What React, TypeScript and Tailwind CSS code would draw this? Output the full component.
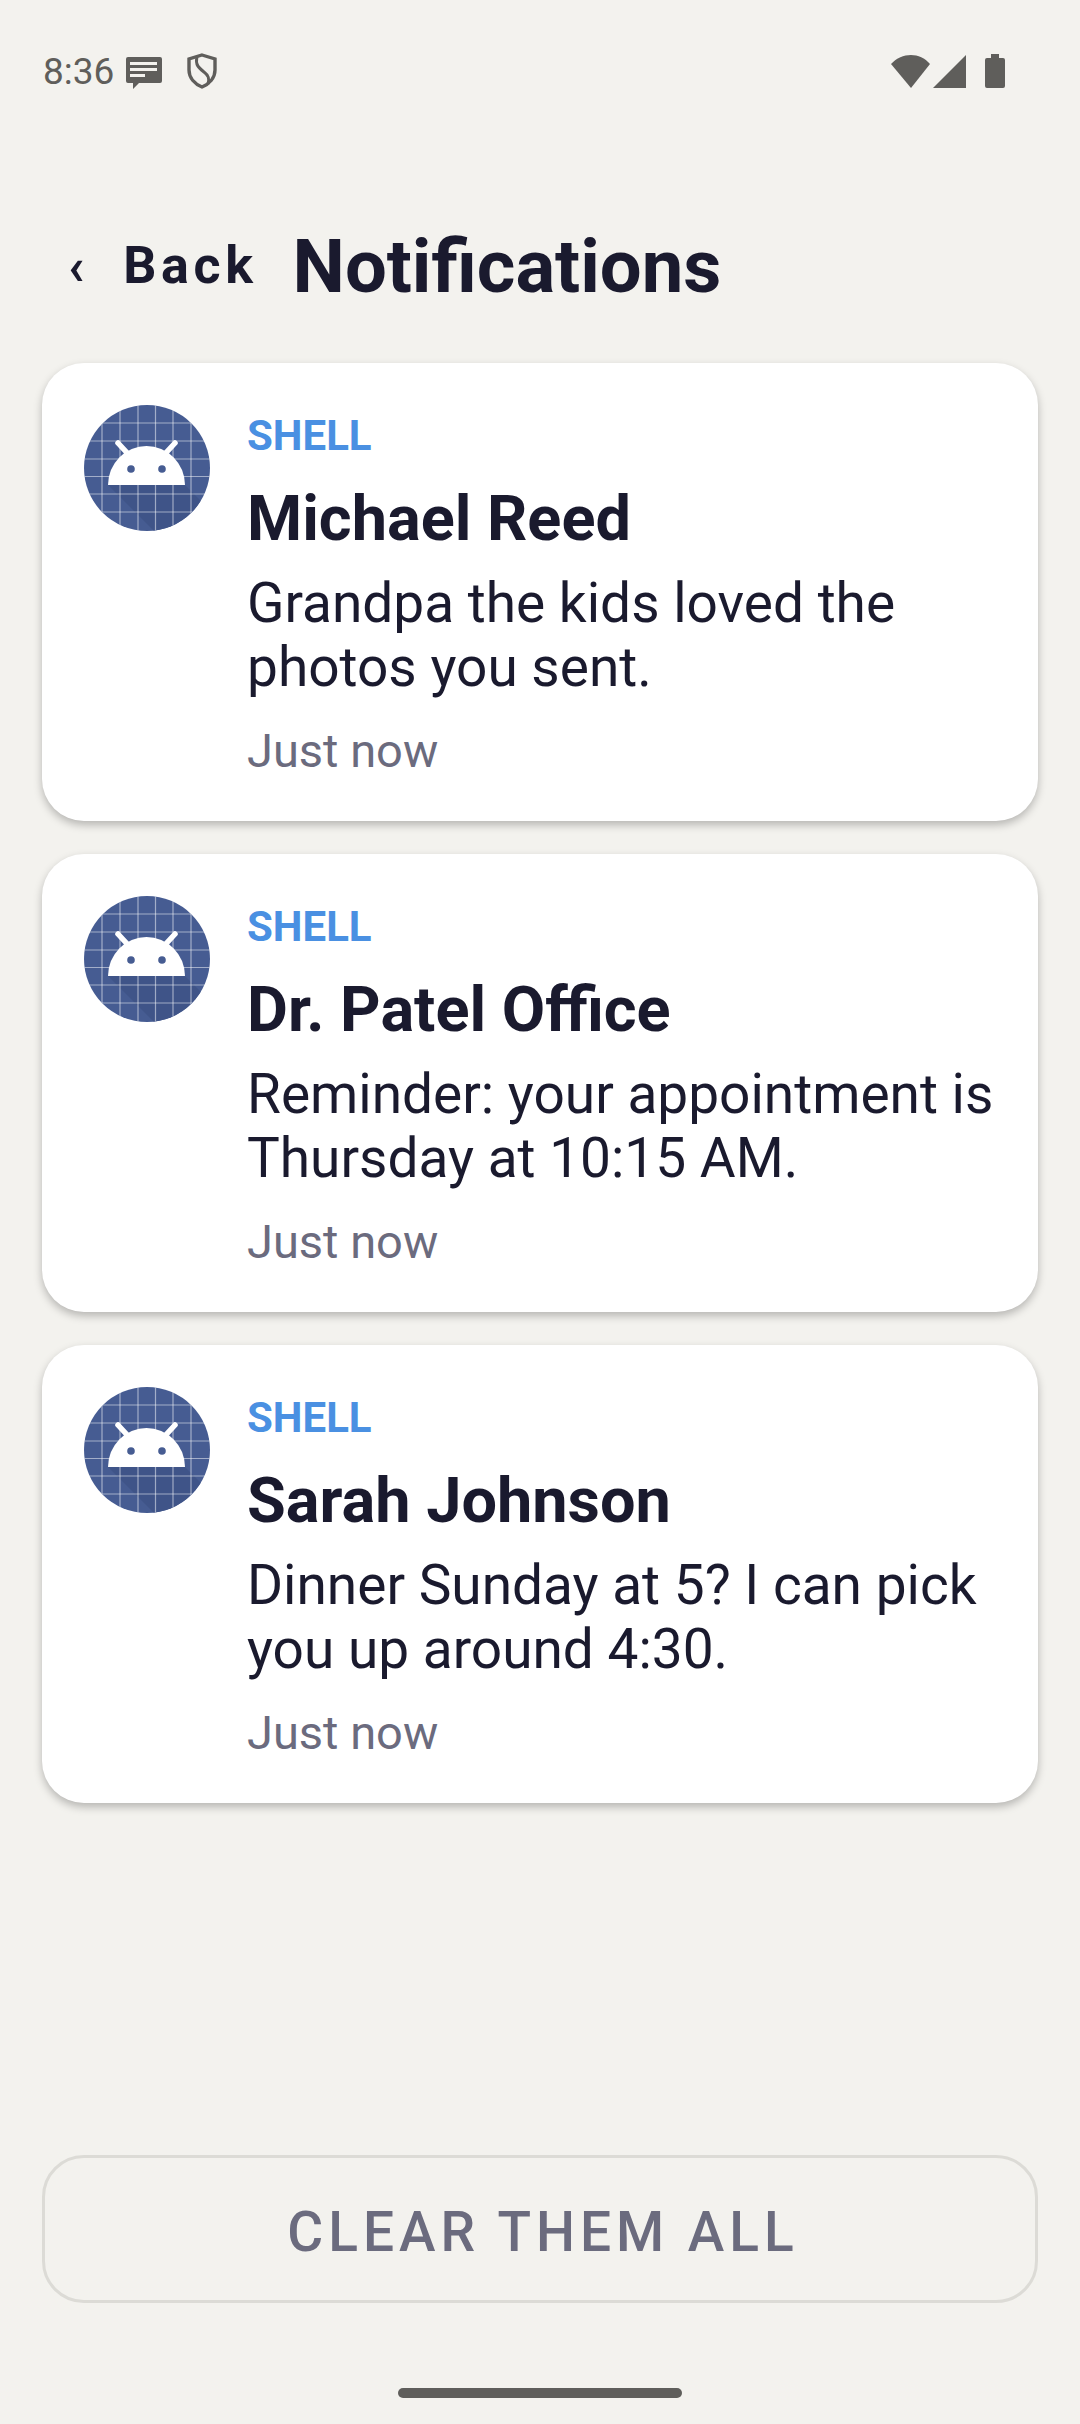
import { Fragment } from 'react';

const NOTIFICATIONS = [
    { title: 'Michael Reed', body: ['Grandpa the kids loved the', 'photos you sent.'] },
    { title: 'Dr. Patel Office', body: ['Reminder: your appointment is', 'Thursday at 10:15 AM.'] },
    { title: 'Sarah Johnson', body: ['Dinner Sunday at 5? I can pick', 'you up around 4:30.'] },
];

function AppIcon() {
    const lines = [18, 36, 54, 71.5, 89, 107];
    return (
        <svg width="126" height="126" viewBox="0 0 126 126" className="shrink-0">
            <defs>
                <clipPath id="icon-circle">
                    <circle cx="63" cy="63" r="63" />
                </clipPath>
            </defs>
            <g clipPath="url(#icon-circle)">
                <rect width="126" height="126" fill="#465c92" />
                <path d="M24 80 L101 80 L126 105 L126 128 L72 128 Z" fill="#3f5488" />
                {lines.map((p) => (
                    <Fragment key={p}>
                        <line x1={p} y1="0" x2={p} y2="126" stroke="#ffffff" strokeOpacity="0.5" strokeWidth="1.2" />
                        <line x1="0" y1={p} x2="126" y2={p} stroke="#ffffff" strokeOpacity="0.5" strokeWidth="1.2" />
                    </Fragment>
                ))}
            </g>
            <path d="M24 80 A38.5 39 0 0 1 101 80 Z" fill="#ffffff" />
            <line x1="34" y1="38" x2="46" y2="51" stroke="#ffffff" strokeWidth="5.5" strokeLinecap="round" />
            <line x1="91" y1="38" x2="79" y2="51" stroke="#ffffff" strokeWidth="5.5" strokeLinecap="round" />
            <circle cx="47" cy="64" r="3.8" fill="#465c92" />
            <circle cx="78" cy="64" r="3.8" fill="#465c92" />
        </svg>
    );
}

function StatusBar() {
    return (
        <div className="flex h-[142px] items-center justify-between pl-[43px] pr-[75px] text-[#5f5e5b]">
            <div className="flex items-center">
                <span className="text-[37px] leading-none">8:36</span>
                <svg width="36" height="32" viewBox="0 0 36 32" className="ml-[12px] mt-[3px]">
                    <path d="M2 0 H34 A2 2 0 0 1 36 2 V24 A2 2 0 0 1 34 26 H13 L7 32 V26 H2 A2 2 0 0 1 0 24 V2 A2 2 0 0 1 2 0 Z" fill="#5f5e5b" />
                    <rect x="4" y="5" width="27" height="3" fill="#f3f2ee" />
                    <rect x="4" y="11" width="27" height="3" fill="#f3f2ee" />
                    <rect x="4" y="17" width="15" height="3" fill="#f3f2ee" />
                </svg>
                <svg width="30" height="36" viewBox="0 0 30 36" className="ml-[25px]" fill="none" stroke="#5f5e5b" strokeWidth="3.4">
                    <path d="M15 2 L28 6 V17 C28 25 22 31 15 34 C8 31 2 25 2 17 V6 Z" />
                    <path d="M10 4 C8 12 12 15 17 19 C21 22 23 25 21 31" strokeWidth="3" />
                </svg>
            </div>
            <div className="flex items-center">
                <svg width="40" height="33" viewBox="0 0 40 33">
                    <path d="M0 9 C11 -3 29 -3 39 9 L20 33 Z" fill="#5f5e5b" />
                </svg>
                <svg width="33" height="33" viewBox="0 0 33 33" className="ml-[2px]">
                    <path d="M33 0 V33 H0 Z" fill="#5f5e5b" />
                </svg>
                <svg width="20" height="34" viewBox="0 0 20 34" className="ml-[19px]">
                    <path d="M6 0 H14 V4 H18 A2 2 0 0 1 20 6 V32 A2 2 0 0 1 18 34 H2 A2 2 0 0 1 0 32 V6 A2 2 0 0 1 2 4 H6 Z" fill="#5f5e5b" />
                </svg>
            </div>
        </div>
    );
}

function NotificationCard({ title, body }: { title: string; body: string[] }) {
    return (
        <div className="flex h-[458px] gap-[37px] rounded-[42px] bg-white p-[42px] shadow-[0_4px_8px_rgba(0,0,0,0.25)]">
            <AppIcon />
            <div className="flex flex-col">
                <div className="mt-[6px] text-[42px] leading-[50px] font-bold text-[#4a90e2]">SHELL</div>
                <div className="mt-[18px] text-[63px] leading-[80px] font-bold text-[#1a1a2e]">{title}</div>
                <div className="mt-[12px] text-[55px] leading-[64px] text-[#1a1a2e]">
                    {body.map((line) => (
                        <div key={line}>{line}</div>
                    ))}
                </div>
                <div className="mt-[22px] text-[47px] leading-[60px] text-[#6b6b7e]">Just now</div>
            </div>
        </div>
    );
}

export default function App() {
    return (
        <div className="flex h-[2424px] w-[1080px] flex-col overflow-hidden bg-[#f3f2ee] font-['Roboto',sans-serif]">
            <StatusBar />
            <div className="mt-[80px] flex h-[90px] items-center pl-[68px] text-[#1a1a2e]">
                <span className="text-[52px] font-bold leading-none">‹</span>
                <span className="mb-[3px] ml-[39px] text-[52px] font-bold tracking-[4.6px]">Back</span>
                <span className="ml-[35px] text-[74.2px] font-bold">Notifications</span>
            </div>
            <div className="mt-[51px] flex flex-col gap-[33px] px-[42px]">
                {NOTIFICATIONS.map((n) => (
                    <NotificationCard key={n.title} title={n.title} body={n.body} />
                ))}
            </div>
            <div className="mt-auto px-[42px]">
                <div className="flex h-[148px] items-center justify-center rounded-[42px] border-[3px] border-[#dcdbd6] pt-[6px] pl-[6px] text-[55px] font-medium tracking-[5px] text-[#6b6b7e]">
                    CLEAR THEM ALL
                </div>
                <div className="mx-auto mt-[85px] mb-[26px] h-[10px] w-[284px] rounded-full bg-[#5f5e5b]" />
            </div>
        </div>
    );
}
